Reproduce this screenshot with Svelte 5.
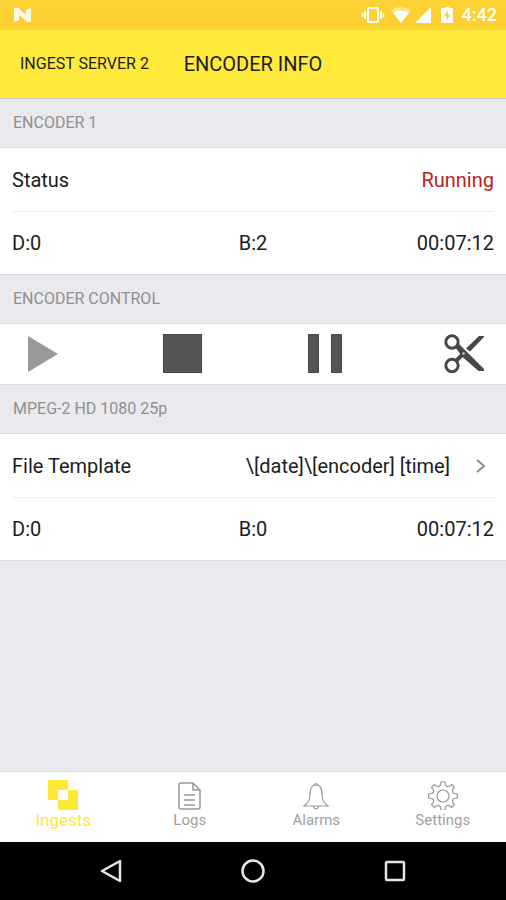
<script lang="ts">
  type Tab = 'Ingests' | 'Logs' | 'Alarms' | 'Settings';

  const tabs: Tab[] = ['Ingests', 'Logs', 'Alarms', 'Settings'];
  let activeTab = $state<Tab>('Ingests');

  const encoder = { name: 'Encoder 1', status: 'Running', dropped: 0, buffered: 2, time: '00:07:12' };
  const output = { name: 'MPEG-2 HD 1080 25p', template: '\\[date]\\[encoder] [time]', dropped: 0, buffered: 0, time: '00:07:12' };

  // outline of a cog with rounded notches, centred on 15,16
  function gearPath(teeth: number, outer: number, inner: number) {
    const step = (Math.PI * 2) / teeth;
    const at = (a: number, r: number) => `${(15 + r * Math.cos(a)).toFixed(2)} ${(16 + r * Math.sin(a)).toFixed(2)}`;
    let d = '';
    for (let i = 0; i < teeth; i++) {
      const a = i * step - Math.PI / 2;
      d += `${i ? 'L' : 'M'}${at(a - 0.18 * step, outer)}L${at(a + 0.18 * step, outer)}`;
      d += `L${at(a + 0.24 * step, inner + 1)}Q${at(a + 0.5 * step, inner - 2)} ${at(a + 0.76 * step, inner + 1)}`;
    }
    return d + 'Z';
  }
</script>

{#snippet stats(s: { dropped: number; buffered: number; time: string })}
  <div class="row stats">
    <span>D:{s.dropped}</span>
    <span>B:{s.buffered}</span>
    <span>{s.time}</span>
  </div>
{/snippet}

<div class="app">
  <div class="status-bar">
    <svg width="20" height="16" viewBox="0 0 20 16">
      <path d="M1 1H6L13 8V3L18 1V15H14L6 8V13L1 15Z" fill="#fffbe8" />
    </svg>
    <div class="status-icons">
      <svg width="24" height="18" viewBox="0 0 24 18">
        <rect x="7" y="2" width="10" height="14" rx="1" fill="none" stroke="#fff" stroke-width="2" />
        <path d="M4 5V13M20 5V13" stroke="#fff" stroke-width="2" />
        <path d="M1.5 7V11M22.5 7V11" stroke="#fff" stroke-width="1.5" />
      </svg>
      <svg class="wifi" width="20" height="18" viewBox="0 0 20 18">
        <path d="M0 4Q10 -2 20 4L10 17Z" fill="#fff" opacity=".45" />
        <path d="M2 6.5Q10 3 18 6.5L10 17Z" fill="#fff" />
      </svg>
      <svg class="signal" width="18" height="18" viewBox="0 0 18 18"><path d="M17 1V17H1Z" fill="#fff" /></svg>
      <svg class="battery" width="12" height="18" viewBox="0 0 12 18">
        <path d="M1 2H4V1H8V2H11Q12 2 12 3V16Q12 17 11 17H1Q0 17 0 16V3Q0 2 1 2Z" fill="#fff" />
        <path d="M7 4L3 10H5.5V15L9 8.5H7Z" fill="#fdd032" />
      </svg>
      <span>4:42</span>
    </div>
  </div>

  <header>
    <button class="back">INGEST SERVER 2</button>
    <h1>ENCODER INFO</h1>
  </header>

  <main>
    <h2>{encoder.name.toUpperCase()}</h2>
    <section>
      <div class="row">
        <span>Status</span>
        <span class="running">{encoder.status}</span>
      </div>
      {@render stats(encoder)}
    </section>

    <h2>ENCODER CONTROL</h2>
    <section class="controls">
      <button aria-label="Start" disabled>
        <svg width="40" height="40" viewBox="0 0 40 40"><path d="M6 2V38L36 20Z" fill="#999" /></svg>
      </button>
      <button aria-label="Stop">
        <svg width="40" height="40" viewBox="0 0 40 40"><rect x=".5" y=".5" width="38" height="38" fill="#555" stroke="#444" /></svg>
      </button>
      <button aria-label="Pause">
        <svg width="40" height="40" viewBox="0 0 40 40">
          <path d="M5.5 .5H15.5V38.5H5.5ZM28.5 .5H38.5V38.5H28.5Z" fill="#555" stroke="#444" />
        </svg>
      </button>
      <button aria-label="Split">
        <svg width="40" height="40" viewBox="0 0 40 40">
          <g fill="none" stroke="#484848" stroke-width="3">
            <circle cx="8" cy="8" r="6.2" />
            <circle cx="8" cy="31.5" r="6.2" />
            <path d="M12 27L19 20" stroke-width="4" />
          </g>
          <path d="M11 13L14.5 9.500L40 35V37H34.500L18.500 23ZM22 14.500L35 2H40V3L26 17.500Z" fill="#484848" />
          <circle cx="19.5" cy="19.5" r="1.3" fill="#ccc" />
        </svg>
      </button>
    </section>

    <h2>{output.name}</h2>
    <section>
      <button class="row template">
        <span>File Template</span>
        <span class="value">{output.template}</span>
        <svg width="10" height="16" viewBox="0 0 10 16"><path d="M1 2L8 8L1 14" fill="none" stroke="#8c8c8c" stroke-width="2" /></svg>
      </button>
      {@render stats(output)}
    </section>
  </main>

  <nav class="tabs">
    {#each tabs as tab}
      <button class:active={activeTab === tab} onclick={() => (activeTab = tab)}>
        <svg width="30" height="30" viewBox="0 0 30 30" fill="none" stroke="#999">
          {#if tab === 'Ingests'}
            <path d="M0 0H20V10H30V30H10V20H0ZM10 10V20H20V10Z" fill="#ffe736" fill-rule="evenodd" stroke="none" />
          {:else if tab === 'Logs'}
            <path d="M6 3H18L25 10V27Q25 29 23 29H6Q4 29 4 27V5Q4 3 6 3ZM18 3V10H25M9 15H20M9 20H20M9 25H20" stroke-width="1.5" />
          {:else if tab === 'Alarms'}
            <path d="M15 5C10 5 9 9 9 14C9 21 7 23 3 26H27C23 23 21 21 21 14C21 9 20 5 15 5ZM13 5Q15 2 17 5M12 26Q15 32 18 26" stroke-width="1.2" />
          {:else}
            <path d={gearPath(8, 14.4, 11)} stroke-width="1.2" stroke-linejoin="round" />
            <circle cx="15" cy="16" r="6" stroke-width="1.2" />
          {/if}
        </svg>
        {tab}
      </button>
    {/each}
  </nav>

  <div class="system-nav">
    <button aria-label="Back">
      <svg width="26" height="26" viewBox="0 0 26 26"><path d="M22 3V23L4 13Z" /></svg>
    </button>
    <button aria-label="Home">
      <svg width="26" height="26" viewBox="0 0 26 26"><circle cx="13" cy="13" r="10.5" /></svg>
    </button>
    <button aria-label="Recent apps">
      <svg width="26" height="26" viewBox="0 0 26 26"><rect x="4" y="4" width="18" height="18" rx="1" /></svg>
    </button>
  </div>
</div>

<style>
  :global(body) { margin: 0; }
  .app { min-height: 100vh; display: flex; flex-direction: column; background: #eae9ee; color: #1c1c1c; font: 20px/24px Roboto, sans-serif; }
  svg { display: block; flex-shrink: 0; }
  button { font: inherit; color: inherit; background: none; border: none; padding: 0; cursor: pointer; }

  .status-bar { height: 30px; padding: 0 9px 0 13px; display: flex; align-items: center; justify-content: space-between; background: linear-gradient(#fdd335, #fdcf30 24px, #fed937); }
  .status-icons { display: flex; align-items: center; color: #fff; font-size: 18px; font-weight: 500; }
  .wifi { margin-left: 6px; }
  .signal { margin-left: 3px; }
  .battery { margin: 0 9px; }

  header { box-sizing: border-box; height: 69px; padding: 0 20px; display: grid; grid-template-columns: 1fr auto 1fr; align-items: center; background: #ffe93a; border-bottom: 1px solid #c9c8c4; }
  .back { justify-self: start; font-size: 16px; }
  h1 { margin: 0; font-size: 20px; line-height: 24px; font-weight: 400; }

  main { flex: 1; }
  h2 { margin: 0; padding: 12px 13px; font-size: 16px; font-weight: 400; color: #8f8f93; }
  section { background: #fff; border: 1px solid #dcdbdf; border-width: 1px 0; }
  .row { box-sizing: border-box; height: 63px; margin: 0 12px; display: flex; align-items: center; justify-content: space-between; }
  .row + .row { border-top: 1px solid #ececec; }
  .running { color: #b82222; }
  .stats { display: grid; grid-template-columns: 1fr 1fr 1fr; }
  .stats span:nth-child(2) { text-align: center; }
  .stats span:last-child { text-align: right; }
  .template { width: calc(100% - 24px); padding-right: 8px; text-align: left; }
  .value { margin: 0 26px 0 auto; }
  .controls { padding: 10px 22px; display: flex; justify-content: space-between; }

  .tabs { height: 70px; display: grid; grid-template-columns: repeat(4, 1fr); background: #fff; border-top: 1px solid #dcdbdf; }
  .tabs button { padding-top: 8px; display: flex; flex-direction: column; align-items: center; font-size: 15px; line-height: 20px; color: #a0a0a0; }
  .tabs .active { font-size: 17px; color: #ffe736; }

  .system-nav { height: 58px; padding: 0 40px; display: grid; grid-template-columns: repeat(3, 1fr); align-items: center; justify-items: center; background: #000; }
  .system-nav svg { fill: none; stroke: #e6e6e6; stroke-width: 2.5; stroke-linejoin: round; }
</style>
